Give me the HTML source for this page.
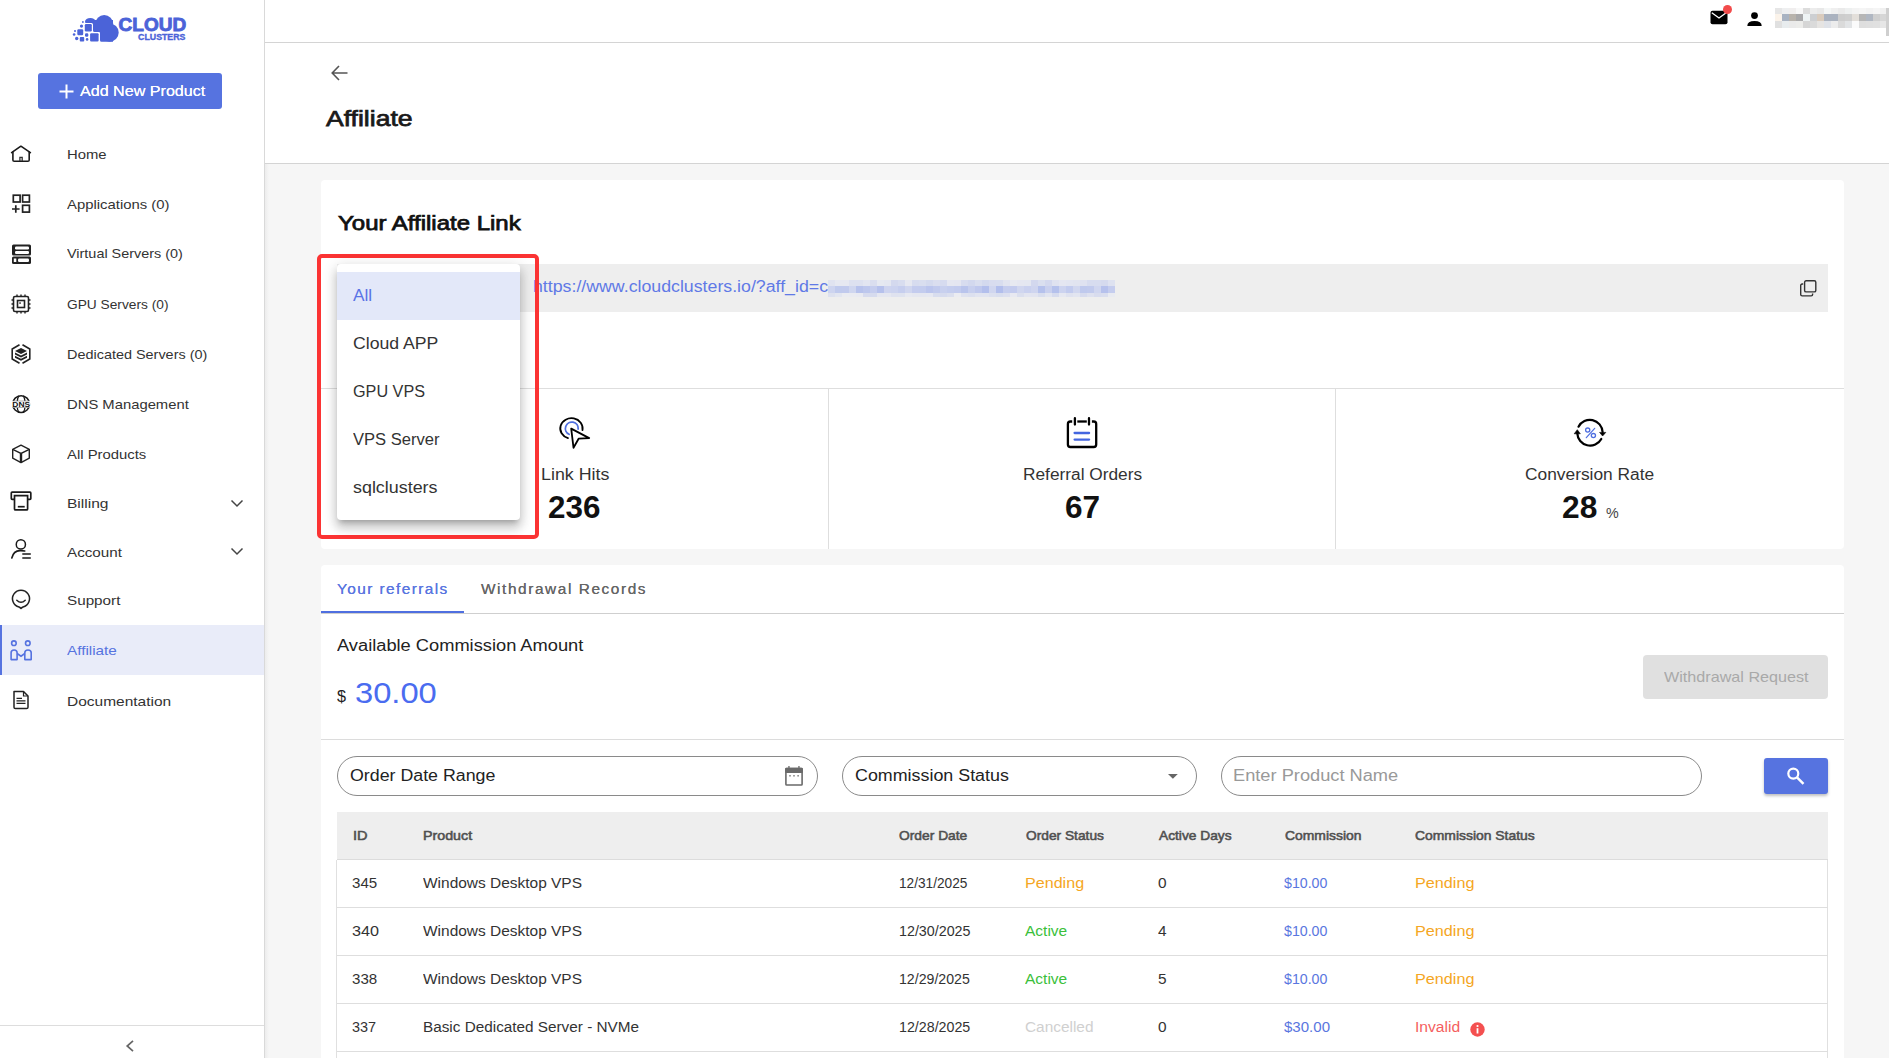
<!DOCTYPE html>
<html><head><meta charset="utf-8">
<style>
*{box-sizing:border-box;margin:0;padding:0}
html,body{width:1889px;height:1058px;overflow:hidden}
body{position:relative;background:#f6f6f6;font-family:"Liberation Sans",sans-serif;color:#333}
.a{position:absolute}
.t{position:absolute;white-space:nowrap;line-height:1}
svg{display:block;position:absolute;overflow:visible}
</style></head><body>
<div class="a" style="left:0;top:0;width:264px;height:1058px;background:#fff"></div>
<div class="a" style="left:264px;top:0;width:5px;height:1058px;background:linear-gradient(to right,#d9d9d9 0,#d9d9d9 1px,#ececec 1px,rgba(245,245,245,0) 5px)"></div>
<svg style="left:72px;top:14px" width="116" height="29" viewBox="0 0 116 29"><g fill="#4b63d8">
<ellipse cx="18.3" cy="7.5" rx="5.3" ry="3.6"/><circle cx="32.2" cy="10" r="9"/><circle cx="37.5" cy="18.6" r="9.2"/>
<path d="M17 6 H41 V27.8 H29.5 Q28 27.8 28 26.3 V19.5 Q28 18 26.5 18 H22.5 Q21 18 21 16.5 V9 Z"/>
</g><g fill="#fff"><rect x="11.6" y="8.9" width="9.4" height="9.8" rx="1.5"/><rect x="17" y="18" width="11" height="10.5" rx="1.5"/></g>
<g fill="#4b63d8"><rect x="12.8" y="10.1" width="7" height="7.4" rx="1.2"/><rect x="18.1" y="19.2" width="8.5" height="8.4" rx="1.1"/>
<rect x="5.3" y="15.2" width="5.9" height="6.1" rx="1.2"/><rect x="7.8" y="23.1" width="4.4" height="4.5" rx="0.8"/><rect x="13" y="19.2" width="3.3" height="3.5" rx="1.2"/>
<circle cx="9.5" cy="12.1" r="1.6"/><circle cx="10.9" cy="8" r="0.9"/><circle cx="3" cy="17" r="1"/><circle cx="2.1" cy="20.5" r="1.3"/><circle cx="4.7" cy="24.5" r="1.7"/><circle cx="15.1" cy="25.4" r="1.3"/></g>
<text x="46.6" y="17.3" font-family="Liberation Sans" font-weight="700" font-size="19.1" fill="#4b63d8" stroke="#4b63d8" stroke-width="0.9" textLength="67.6" lengthAdjust="spacingAndGlyphs">CLOUD</text>
<text x="66.1" y="25.8" font-family="Liberation Sans" font-weight="700" font-size="8.8" fill="#4b63d8" stroke="#4b63d8" stroke-width="0.35" textLength="47.3" lengthAdjust="spacingAndGlyphs">CLUSTERS</text>
</svg>

<div class="a" style="left:38px;top:73px;width:184px;height:36px;background:#5673e0;border-radius:3px"></div>
<svg style="left:59px;top:84px" width="15" height="15" viewBox="0 0 15 15"><path d="M7.5 0.5v14M0.5 7.5h14" stroke="#fff" stroke-width="2"/></svg>
<div class="t" style="left:80.00px;top:84.13px;font-size:14.5px;font-weight:400;color:#fff;letter-spacing:0.000px;transform:scaleX(1.1104);transform-origin:0 0;text-shadow:0 0 0.4px #fff">Add New Product</div>
<svg style="left:0px;top:130px" width="40" height="40" viewBox="0 0 40 40"><path d="M11.6 22.6 L20.9 16.2 L30.4 22.6" fill="none" stroke="#1a1a1a" stroke-width="1.6" stroke-linejoin="round" stroke-linecap="round"/><path d="M12.9 21.5 V30 Q12.9 31.3 14.2 31.3 H27.9 Q29.2 31.3 29.2 30 V21.5" fill="none" stroke="#1a1a1a" stroke-width="1.6"/><path d="M19.9 31 V27.4 H22.2 V31" fill="none" stroke="#333" stroke-width="1.3"/></svg>
<div class="t" style="left:66.70px;top:148.00px;font-size:13px;font-weight:400;color:#333;letter-spacing:0.000px;transform:scaleX(1.1416);transform-origin:0 0;">Home</div>
<svg style="left:11px;top:194px" width="20" height="20" viewBox="0 0 20 20"><rect x="2.3" y="1.2" width="6.8" height="6.8" fill="none" stroke="#222" stroke-width="1.7"/><rect x="11.6" y="1.2" width="6.8" height="6.8" fill="none" stroke="#222" stroke-width="1.7"/><rect x="11.6" y="11.3" width="6.8" height="6.8" fill="none" stroke="#222" stroke-width="1.7"/><path d="M1 15 H8.6 M4.8 11.2 V18.8" stroke="#222" stroke-width="1.7"/></svg>
<div class="t" style="left:66.70px;top:198.00px;font-size:13px;font-weight:400;color:#333;letter-spacing:0.000px;transform:scaleX(1.1439);transform-origin:0 0;">Applications (0)</div>
<svg style="left:11px;top:244px" width="20" height="20" viewBox="0 0 20 20"><rect x="1" y="0.5" width="19" height="11" rx="1.5" fill="#222"/><rect x="1" y="12.5" width="19" height="7.5" rx="1.5" fill="#222"/><rect x="4" y="2.5" width="14" height="3" rx="1.2" fill="#fff"/><rect x="4" y="7" width="14" height="3" rx="1.2" fill="#fff"/><rect x="7" y="14.5" width="11" height="3.5" rx="1.2" fill="#fff"/><rect x="2.8" y="14.5" width="2.5" height="3.5" fill="#fff"/><circle cx="3.3" cy="4" r="0.7" fill="#222"/><circle cx="3.3" cy="8.5" r="0.7" fill="#222"/></svg>
<div class="t" style="left:66.70px;top:247.40px;font-size:13px;font-weight:400;color:#333;letter-spacing:0.000px;transform:scaleX(1.1089);transform-origin:0 0;">Virtual Servers (0)</div>
<svg style="left:11px;top:294px" width="20" height="20" viewBox="0 0 20 20"><rect x="2.5" y="2.5" width="15" height="15" rx="1.5" fill="none" stroke="#222" stroke-width="1.6"/><rect x="6.5" y="6.5" width="7" height="7" fill="none" stroke="#222" stroke-width="1.6"/><rect x="8.3" y="8.3" width="1.5" height="1.5" fill="#222"/><path d="M6 0.5V2.5M10 0.5V2.5M14 0.5V2.5M6 17.5V19.5M10 17.5V19.5M14 17.5V19.5M0.5 6H2.5M0.5 10H2.5M0.5 14H2.5M17.5 6H19.5M17.5 10H19.5M17.5 14H19.5" stroke="#222" stroke-width="1.4"/></svg>
<div class="t" style="left:66.70px;top:297.70px;font-size:13px;font-weight:400;color:#333;letter-spacing:0.000px;transform:scaleX(1.0564);transform-origin:0 0;">GPU Servers (0)</div>
<svg style="left:11px;top:344px" width="20" height="20" viewBox="0 0 20 20"><path d="M8.5 0.8 L1.2 5 V15 L8.5 19.2 M11.5 0.8 L18.8 5 V15 L11.5 19.2" fill="none" stroke="#222" stroke-width="1.6"/><path d="M4 7 L10 4 L16 7 L10 10 Z" fill="#222"/><path d="M4 8.5 V10.5 L10 13.5 L16 10.5 V8.5 L10 11.5Z" fill="#222"/><path d="M4 11.8 V13.8 L10 16.8 L16 13.8 V11.8 L10 14.8Z" fill="#222"/></svg>
<div class="t" style="left:66.70px;top:347.60px;font-size:13px;font-weight:400;color:#333;letter-spacing:0.000px;transform:scaleX(1.1095);transform-origin:0 0;">Dedicated Servers (0)</div>
<svg style="left:11px;top:394px" width="20" height="20" viewBox="0 0 20 20"><circle cx="10.1" cy="10.05" r="8.4" fill="none" stroke="#1a1a1a" stroke-width="1.5"/><path d="M8.2 1.6 Q6.2 4 6.3 7 M12 1.6 Q14 4 13.9 7 M6.3 13.5 Q6.2 16.3 8.2 18.5 M13.9 13.5 Q14 16.3 12 18.5" fill="none" stroke="#1a1a1a" stroke-width="1.3"/><rect x="0.8" y="7" width="18.6" height="6.5" fill="#fff"/><path d="M1.5 7 H18.7 M1.5 13.5 H18.7" stroke="#888" stroke-width="0.7"/><text x="1.3" y="12.7" font-family="Liberation Sans" font-weight="700" font-size="6.6" fill="#111" textLength="17.8" lengthAdjust="spacingAndGlyphs">DNS</text></svg>
<div class="t" style="left:66.70px;top:397.70px;font-size:13px;font-weight:400;color:#333;letter-spacing:0.000px;transform:scaleX(1.1388);transform-origin:0 0;">DNS Management</div>
<svg style="left:11px;top:444px" width="20" height="20" viewBox="0 0 20 20"><path d="M10 1.2 L18.3 5.3 V14.2 L10 18.6 L1.7 14.2 V5.3 Z" fill="none" stroke="#222" stroke-width="1.4" stroke-linejoin="round"/><path d="M1.7 5.3 L10 9.4 L18.3 5.3" fill="none" stroke="#222" stroke-width="1.4"/><path d="M10 9.4 V18.6" stroke="#222" stroke-width="2.4"/></svg>
<div class="t" style="left:66.70px;top:448.40px;font-size:13px;font-weight:400;color:#333;letter-spacing:0.000px;transform:scaleX(1.1431);transform-origin:0 0;">All Products</div>
<svg style="left:5px;top:485px" width="35" height="35" viewBox="0 0 35 35"><path d="M9.5 14.4 H7.1 Q6.3 14.4 6.3 13.6 V8 Q6.3 7.2 7.1 7.2 H25 Q25.8 7.2 25.8 8 V13.6 Q25.8 14.4 25 14.4 H22.6" fill="none" stroke="#1a1a1a" stroke-width="1.7"/><path d="M9.5 10.6 H22.6 V23.9 Q22.6 24.9 21.6 24.9 H10.5 Q9.5 24.9 9.5 23.9 Z" fill="none" stroke="#1a1a1a" stroke-width="1.7"/><path d="M12.8 21.7 H19.7" stroke="#1a1a1a" stroke-width="1.7"/></svg>
<div class="t" style="left:66.70px;top:497.30px;font-size:13px;font-weight:400;color:#333;letter-spacing:0.000px;transform:scaleX(1.1964);transform-origin:0 0;">Billing</div>
<svg style="left:230px;top:499px" width="14" height="9" viewBox="0 0 14 9"><path d="M1.5 1.5 L7 7 L12.5 1.5" fill="none" stroke="#444" stroke-width="1.5"/></svg>
<svg style="left:5px;top:485px" width="35" height="85" viewBox="0 0 35 85"><circle cx="15.85" cy="59.4" r="4.6" fill="none" stroke="#1a1a1a" stroke-width="1.5"/><path d="M6.8 73 Q8.5 65.8 15 65.6 Q18 65.5 19.7 66" fill="none" stroke="#1a1a1a" stroke-width="1.6" stroke-linecap="round"/><path d="M17.3 69.1 H25.8 M17.3 73 H25.8" stroke="#1a1a1a" stroke-width="1.5"/></svg>
<div class="t" style="left:66.70px;top:545.80px;font-size:13px;font-weight:400;color:#333;letter-spacing:0.000px;transform:scaleX(1.1706);transform-origin:0 0;">Account</div>
<svg style="left:230px;top:547px" width="14" height="9" viewBox="0 0 14 9"><path d="M1.5 1.5 L7 7 L12.5 1.5" fill="none" stroke="#444" stroke-width="1.5"/></svg>
<svg style="left:11px;top:590px" width="20" height="20" viewBox="0 0 20 20"><path d="M10 18.5 Q8.8 17.3 8 17 A8.5 8.5 0 1 1 12 17 Q11.2 17.3 10 18.5 Z" fill="none" stroke="#222" stroke-width="1.5" stroke-linejoin="round"/><path d="M5.8 10.2 Q10 14.5 14.2 10.2" fill="none" stroke="#222" stroke-width="1.5" stroke-linecap="round"/></svg>
<div class="t" style="left:66.70px;top:594.20px;font-size:13px;font-weight:400;color:#333;letter-spacing:0.000px;transform:scaleX(1.1724);transform-origin:0 0;">Support</div>
<div class="a" style="left:0;top:625px;width:264px;height:50px;background:#e9ecf9;border-left:2px solid #5673e0"></div>
<svg style="left:0px;top:626px" width="40" height="50" viewBox="0 0 40 50"><circle cx="13.9" cy="17.2" r="2.3" fill="none" stroke="#5673e0" stroke-width="1.6"/><circle cx="27.8" cy="17.2" r="2.3" fill="none" stroke="#5673e0" stroke-width="1.6"/><path d="M11.1 33.6 V26.8 Q11.1 24 14.1 24 Q17.1 24 17.1 26.8 V33.6 Z M24.8 33.6 V26.8 Q24.8 24 28 24 Q31.2 24 31.2 26.8 V33.6 Z" fill="none" stroke="#5673e0" stroke-width="1.6" stroke-linejoin="round"/><path d="M17.1 27.5 L21 30.2 L24.8 27.5" fill="none" stroke="#5673e0" stroke-width="1.6"/></svg>
<div class="t" style="left:66.70px;top:644.10px;font-size:13px;font-weight:400;color:#5673e0;letter-spacing:0.000px;transform:scaleX(1.1744);transform-origin:0 0;">Affiliate</div>
<svg style="left:11px;top:690px" width="20" height="20" viewBox="0 0 20 20"><path d="M3 1.5 H12.5 L17 6 V17.2 Q17 18.6 15.6 18.6 H4.4 Q3 18.6 3 17.2 Z" fill="none" stroke="#222" stroke-width="1.5" stroke-linejoin="round"/><path d="M12.5 1.5 V6 H17" fill="none" stroke="#222" stroke-width="1.2"/><path d="M5.5 8.3 H11 M5.5 10.8 H14.5 M5.5 13.3 H14.5" stroke="#222" stroke-width="1.3"/></svg>
<div class="t" style="left:66.70px;top:694.70px;font-size:13px;font-weight:400;color:#333;letter-spacing:0.000px;transform:scaleX(1.1915);transform-origin:0 0;">Documentation</div>
<div class="a" style="left:0;top:1025px;width:264px;height:1px;background:#ddd"></div>
<svg style="left:125px;top:1040px" width="10" height="12" viewBox="0 0 10 12"><path d="M8 0.8 L2.2 6 L8 11.2" fill="none" stroke="#666" stroke-width="1.7"/></svg>
<div class="a" style="left:265px;top:0;width:1624px;height:43px;background:#fff;border-bottom:1px solid #d4d4d4"></div>
<svg style="left:1710px;top:10px" width="18" height="15" viewBox="0 0 18 15"><rect x="0.5" y="0.8" width="17" height="13.5" rx="2" fill="#000"/><path d="M1.8 2.8 L9 8 L16.2 2.8" fill="none" stroke="#fff" stroke-width="1.3"/></svg>
<div class="a" style="left:1723px;top:5px;width:9px;height:9px;border-radius:50%;background:#f24b4b"></div>
<svg style="left:1747px;top:12px" width="15" height="14" viewBox="0 0 15 14"><circle cx="7.5" cy="3.6" r="3.4" fill="#000"/><path d="M0.3 14 Q0.3 9 7.5 9 Q14.7 9 14.7 14 Z" fill="#000"/></svg>
<div class="a" style="left:1775px;top:8px;width:112px;height:20px;overflow:hidden"><div class="a" style="left:0px;top:0px;width:7px;height:7px;background:#e6e6e6"></div><div class="a" style="left:7px;top:0px;width:7px;height:7px;background:#eeeff0"></div><div class="a" style="left:14px;top:0px;width:7px;height:7px;background:#f0eeee"></div><div class="a" style="left:21px;top:0px;width:7px;height:7px;background:#f8f8f8"></div><div class="a" style="left:28px;top:0px;width:7px;height:7px;background:#dcdcdc"></div><div class="a" style="left:35px;top:0px;width:7px;height:7px;background:#ececec"></div><div class="a" style="left:42px;top:0px;width:7px;height:7px;background:#e8e8e8"></div><div class="a" style="left:49px;top:0px;width:7px;height:7px;background:#f4f6f6"></div><div class="a" style="left:56px;top:0px;width:7px;height:7px;background:#efefef"></div><div class="a" style="left:63px;top:0px;width:7px;height:7px;background:#eaeaea"></div><div class="a" style="left:70px;top:0px;width:7px;height:7px;background:#eef0f0"></div><div class="a" style="left:77px;top:0px;width:7px;height:7px;background:#f3f3f3"></div><div class="a" style="left:84px;top:0px;width:7px;height:7px;background:#f5f5f5"></div><div class="a" style="left:91px;top:0px;width:7px;height:7px;background:#f2f2f2"></div><div class="a" style="left:98px;top:0px;width:7px;height:7px;background:#f5f5f5"></div><div class="a" style="left:105px;top:0px;width:7px;height:7px;background:#f0f0f0"></div><div class="a" style="left:0px;top:6px;width:7px;height:7px;background:#fbf3ea"></div><div class="a" style="left:7px;top:6px;width:7px;height:7px;background:#a9b3c2"></div><div class="a" style="left:14px;top:6px;width:7px;height:7px;background:#b8b3ac"></div><div class="a" style="left:21px;top:6px;width:7px;height:7px;background:#a8a8aa"></div><div class="a" style="left:28px;top:6px;width:7px;height:7px;background:#eef3f4"></div><div class="a" style="left:35px;top:6px;width:7px;height:7px;background:#cdcfd2"></div><div class="a" style="left:42px;top:6px;width:7px;height:7px;background:#d9cbbd"></div><div class="a" style="left:49px;top:6px;width:7px;height:7px;background:#aab2bf"></div><div class="a" style="left:56px;top:6px;width:7px;height:7px;background:#aab2bf"></div><div class="a" style="left:63px;top:6px;width:7px;height:7px;background:#cdcdcd"></div><div class="a" style="left:70px;top:6px;width:7px;height:7px;background:#cfcfcf"></div><div class="a" style="left:77px;top:6px;width:7px;height:7px;background:#e3dfda"></div><div class="a" style="left:84px;top:6px;width:7px;height:7px;background:#b6b6b6"></div><div class="a" style="left:91px;top:6px;width:7px;height:7px;background:#b0b7c2"></div><div class="a" style="left:98px;top:6px;width:7px;height:7px;background:#cfcfcf"></div><div class="a" style="left:105px;top:6px;width:7px;height:7px;background:#d6d6d6"></div><div class="a" style="left:0px;top:13px;width:7px;height:7px;background:#e0e0e0"></div><div class="a" style="left:7px;top:13px;width:7px;height:7px;background:#e8ecee"></div><div class="a" style="left:14px;top:13px;width:7px;height:7px;background:#eaeaea"></div><div class="a" style="left:21px;top:13px;width:7px;height:7px;background:#ececea"></div><div class="a" style="left:28px;top:13px;width:7px;height:7px;background:#d6d6d6"></div><div class="a" style="left:35px;top:13px;width:7px;height:7px;background:#dadada"></div><div class="a" style="left:42px;top:13px;width:7px;height:7px;background:#e6e4e2"></div><div class="a" style="left:49px;top:13px;width:7px;height:7px;background:#dfe2e8"></div><div class="a" style="left:56px;top:13px;width:7px;height:7px;background:#ececec"></div><div class="a" style="left:63px;top:13px;width:7px;height:7px;background:#dadada"></div><div class="a" style="left:70px;top:13px;width:7px;height:7px;background:#e2e4e6"></div><div class="a" style="left:77px;top:13px;width:7px;height:7px;background:#fbfbfb"></div><div class="a" style="left:84px;top:13px;width:7px;height:7px;background:#dedede"></div><div class="a" style="left:91px;top:13px;width:7px;height:7px;background:#dfdfdf"></div><div class="a" style="left:98px;top:13px;width:7px;height:7px;background:#e0e0e0"></div><div class="a" style="left:105px;top:13px;width:7px;height:7px;background:#e6e6e6"></div></div>
<div class="a" style="left:1886px;top:8px;width:3px;height:28px;background:#cfcfcf"></div>
<div class="a" style="left:265px;top:43px;width:1624px;height:121px;background:#fff;border-bottom:1px solid #d4d4d4"></div>
<svg style="left:331px;top:65px" width="17" height="16" viewBox="0 0 17 16"><path d="M8 1 L1.2 8 L8 15 M1.2 8 H16.5" fill="none" stroke="#555" stroke-width="1.6"/></svg>
<div class="t" style="left:325.50px;top:108.08px;font-size:22px;font-weight:400;color:#1a1a1a;letter-spacing:0.000px;transform:scaleX(1.2056);transform-origin:0 0;-webkit-text-stroke:0.75px #1a1a1a">Affiliate</div>
<div class="a" style="left:321px;top:180px;width:1523px;height:369px;background:#fff;border-radius:4px"></div>
<div class="t" style="left:337.50px;top:212.97px;font-size:20px;font-weight:400;color:#111;letter-spacing:0.000px;transform:scaleX(1.1993);transform-origin:0 0;-webkit-text-stroke:0.75px #111">Your Affiliate Link</div>
<div class="a" style="left:337px;top:264px;width:1491px;height:48px;background:#eeeeee"></div>
<div class="t" style="left:533.00px;top:278.96px;font-size:16px;font-weight:400;color:#6079e6;letter-spacing:0.000px;transform:scaleX(1.1088);transform-origin:0 0;">https://www.cloudclusters.io/?aff_id=c</div>
<div class="a" style="left:828px;top:279.6px;width:287px;height:17.4px;overflow:hidden"><div class="a" style="left:0px;top:0px;width:7px;height:6.7px;background:rgb(224, 227, 240)"></div><div class="a" style="left:0px;top:6.7px;width:7px;height:7.1px;background:rgb(205, 212, 239)"></div><div class="a" style="left:0px;top:13.8px;width:7px;height:3.6px;background:rgb(221, 225, 239)"></div><div class="a" style="left:7px;top:0px;width:7px;height:6.7px;background:rgb(230, 232, 241)"></div><div class="a" style="left:7px;top:6.7px;width:7px;height:7.1px;background:rgb(192, 202, 237)"></div><div class="a" style="left:7px;top:13.8px;width:7px;height:3.6px;background:rgb(227, 230, 240)"></div><div class="a" style="left:14px;top:0px;width:7px;height:6.7px;background:rgb(230, 232, 241)"></div><div class="a" style="left:14px;top:6.7px;width:7px;height:7.1px;background:rgb(193, 202, 237)"></div><div class="a" style="left:14px;top:13.8px;width:7px;height:3.6px;background:rgb(235, 236, 241)"></div><div class="a" style="left:21px;top:0px;width:7px;height:6.7px;background:rgb(221, 225, 240)"></div><div class="a" style="left:21px;top:6.7px;width:7px;height:7.1px;background:rgb(207, 214, 239)"></div><div class="a" style="left:21px;top:13.8px;width:7px;height:3.6px;background:rgb(234, 235, 241)"></div><div class="a" style="left:28px;top:0px;width:7px;height:6.7px;background:rgb(221, 225, 240)"></div><div class="a" style="left:28px;top:6.7px;width:7px;height:7.1px;background:rgb(183, 194, 236)"></div><div class="a" style="left:28px;top:13.8px;width:7px;height:3.6px;background:rgb(233, 234, 241)"></div><div class="a" style="left:35px;top:0px;width:7px;height:6.7px;background:rgb(226, 229, 241)"></div><div class="a" style="left:35px;top:6.7px;width:7px;height:7.1px;background:rgb(189, 199, 237)"></div><div class="a" style="left:35px;top:13.8px;width:7px;height:3.6px;background:rgb(215, 219, 238)"></div><div class="a" style="left:42px;top:0px;width:7px;height:6.7px;background:rgb(218, 222, 239)"></div><div class="a" style="left:42px;top:6.7px;width:7px;height:7.1px;background:rgb(197, 205, 238)"></div><div class="a" style="left:42px;top:13.8px;width:7px;height:3.6px;background:rgb(214, 219, 238)"></div><div class="a" style="left:49px;top:0px;width:7px;height:6.7px;background:rgb(230, 233, 241)"></div><div class="a" style="left:49px;top:6.7px;width:7px;height:7.1px;background:rgb(182, 193, 236)"></div><div class="a" style="left:49px;top:13.8px;width:7px;height:3.6px;background:rgb(229, 231, 240)"></div><div class="a" style="left:56px;top:0px;width:7px;height:6.7px;background:rgb(228, 231, 241)"></div><div class="a" style="left:56px;top:6.7px;width:7px;height:7.1px;background:rgb(206, 212, 239)"></div><div class="a" style="left:56px;top:13.8px;width:7px;height:3.6px;background:rgb(229, 231, 240)"></div><div class="a" style="left:63px;top:0px;width:7px;height:6.7px;background:rgb(212, 217, 238)"></div><div class="a" style="left:63px;top:6.7px;width:7px;height:7.1px;background:rgb(204, 211, 239)"></div><div class="a" style="left:63px;top:13.8px;width:7px;height:3.6px;background:rgb(223, 226, 239)"></div><div class="a" style="left:70px;top:0px;width:7px;height:6.7px;background:rgb(216, 221, 239)"></div><div class="a" style="left:70px;top:6.7px;width:7px;height:7.1px;background:rgb(198, 206, 238)"></div><div class="a" style="left:70px;top:13.8px;width:7px;height:3.6px;background:rgb(223, 227, 239)"></div><div class="a" style="left:77px;top:0px;width:7px;height:6.7px;background:rgb(230, 232, 241)"></div><div class="a" style="left:77px;top:6.7px;width:7px;height:7.1px;background:rgb(208, 214, 239)"></div><div class="a" style="left:77px;top:13.8px;width:7px;height:3.6px;background:rgb(231, 233, 241)"></div><div class="a" style="left:84px;top:0px;width:7px;height:6.7px;background:rgb(215, 220, 239)"></div><div class="a" style="left:84px;top:6.7px;width:7px;height:7.1px;background:rgb(196, 204, 238)"></div><div class="a" style="left:84px;top:13.8px;width:7px;height:3.6px;background:rgb(229, 231, 240)"></div><div class="a" style="left:91px;top:0px;width:7px;height:6.7px;background:rgb(217, 222, 239)"></div><div class="a" style="left:91px;top:6.7px;width:7px;height:7.1px;background:rgb(195, 204, 238)"></div><div class="a" style="left:91px;top:13.8px;width:7px;height:3.6px;background:rgb(229, 231, 240)"></div><div class="a" style="left:98px;top:0px;width:7px;height:6.7px;background:rgb(212, 218, 238)"></div><div class="a" style="left:98px;top:6.7px;width:7px;height:7.1px;background:rgb(187, 197, 237)"></div><div class="a" style="left:98px;top:13.8px;width:7px;height:3.6px;background:rgb(230, 232, 241)"></div><div class="a" style="left:105px;top:0px;width:7px;height:6.7px;background:rgb(218, 222, 239)"></div><div class="a" style="left:105px;top:6.7px;width:7px;height:7.1px;background:rgb(193, 202, 237)"></div><div class="a" style="left:105px;top:13.8px;width:7px;height:3.6px;background:rgb(216, 221, 238)"></div><div class="a" style="left:112px;top:0px;width:7px;height:6.7px;background:rgb(214, 219, 239)"></div><div class="a" style="left:112px;top:6.7px;width:7px;height:7.1px;background:rgb(200, 208, 238)"></div><div class="a" style="left:112px;top:13.8px;width:7px;height:3.6px;background:rgb(214, 219, 238)"></div><div class="a" style="left:119px;top:0px;width:7px;height:6.7px;background:rgb(229, 231, 241)"></div><div class="a" style="left:119px;top:6.7px;width:7px;height:7.1px;background:rgb(196, 205, 238)"></div><div class="a" style="left:119px;top:13.8px;width:7px;height:3.6px;background:rgb(219, 223, 238)"></div><div class="a" style="left:126px;top:0px;width:7px;height:6.7px;background:rgb(228, 230, 241)"></div><div class="a" style="left:126px;top:6.7px;width:7px;height:7.1px;background:rgb(194, 203, 238)"></div><div class="a" style="left:126px;top:13.8px;width:7px;height:3.6px;background:rgb(235, 236, 241)"></div><div class="a" style="left:133px;top:0px;width:7px;height:6.7px;background:rgb(215, 220, 239)"></div><div class="a" style="left:133px;top:6.7px;width:7px;height:7.1px;background:rgb(185, 196, 236)"></div><div class="a" style="left:133px;top:13.8px;width:7px;height:3.6px;background:rgb(223, 226, 239)"></div><div class="a" style="left:140px;top:0px;width:7px;height:6.7px;background:rgb(210, 216, 238)"></div><div class="a" style="left:140px;top:6.7px;width:7px;height:7.1px;background:rgb(199, 207, 238)"></div><div class="a" style="left:140px;top:13.8px;width:7px;height:3.6px;background:rgb(220, 224, 239)"></div><div class="a" style="left:147px;top:0px;width:7px;height:6.7px;background:rgb(217, 222, 239)"></div><div class="a" style="left:147px;top:6.7px;width:7px;height:7.1px;background:rgb(191, 200, 237)"></div><div class="a" style="left:147px;top:13.8px;width:7px;height:3.6px;background:rgb(225, 228, 240)"></div><div class="a" style="left:154px;top:0px;width:7px;height:6.7px;background:rgb(211, 217, 238)"></div><div class="a" style="left:154px;top:6.7px;width:7px;height:7.1px;background:rgb(179, 191, 236)"></div><div class="a" style="left:154px;top:13.8px;width:7px;height:3.6px;background:rgb(225, 228, 240)"></div><div class="a" style="left:161px;top:0px;width:7px;height:6.7px;background:rgb(216, 220, 239)"></div><div class="a" style="left:161px;top:6.7px;width:7px;height:7.1px;background:rgb(208, 214, 239)"></div><div class="a" style="left:161px;top:13.8px;width:7px;height:3.6px;background:rgb(220, 224, 239)"></div><div class="a" style="left:168px;top:0px;width:7px;height:6.7px;background:rgb(216, 221, 239)"></div><div class="a" style="left:168px;top:6.7px;width:7px;height:7.1px;background:rgb(178, 190, 236)"></div><div class="a" style="left:168px;top:13.8px;width:7px;height:3.6px;background:rgb(217, 222, 238)"></div><div class="a" style="left:175px;top:0px;width:7px;height:6.7px;background:rgb(225, 228, 240)"></div><div class="a" style="left:175px;top:6.7px;width:7px;height:7.1px;background:rgb(197, 205, 238)"></div><div class="a" style="left:175px;top:13.8px;width:7px;height:3.6px;background:rgb(221, 224, 239)"></div><div class="a" style="left:182px;top:0px;width:7px;height:6.7px;background:rgb(231, 233, 241)"></div><div class="a" style="left:182px;top:6.7px;width:7px;height:7.1px;background:rgb(195, 203, 238)"></div><div class="a" style="left:182px;top:13.8px;width:7px;height:3.6px;background:rgb(232, 233, 241)"></div><div class="a" style="left:189px;top:0px;width:7px;height:6.7px;background:rgb(229, 231, 241)"></div><div class="a" style="left:189px;top:6.7px;width:7px;height:7.1px;background:rgb(208, 214, 239)"></div><div class="a" style="left:189px;top:13.8px;width:7px;height:3.6px;background:rgb(219, 223, 238)"></div><div class="a" style="left:196px;top:0px;width:7px;height:6.7px;background:rgb(228, 231, 241)"></div><div class="a" style="left:196px;top:6.7px;width:7px;height:7.1px;background:rgb(202, 209, 239)"></div><div class="a" style="left:196px;top:13.8px;width:7px;height:3.6px;background:rgb(227, 229, 240)"></div><div class="a" style="left:203px;top:0px;width:7px;height:6.7px;background:rgb(211, 216, 238)"></div><div class="a" style="left:203px;top:6.7px;width:7px;height:7.1px;background:rgb(207, 213, 239)"></div><div class="a" style="left:203px;top:13.8px;width:7px;height:3.6px;background:rgb(226, 228, 240)"></div><div class="a" style="left:210px;top:0px;width:7px;height:6.7px;background:rgb(218, 223, 239)"></div><div class="a" style="left:210px;top:6.7px;width:7px;height:7.1px;background:rgb(181, 193, 236)"></div><div class="a" style="left:210px;top:13.8px;width:7px;height:3.6px;background:rgb(217, 222, 238)"></div><div class="a" style="left:217px;top:0px;width:7px;height:6.7px;background:rgb(211, 216, 238)"></div><div class="a" style="left:217px;top:6.7px;width:7px;height:7.1px;background:rgb(201, 208, 238)"></div><div class="a" style="left:217px;top:13.8px;width:7px;height:3.6px;background:rgb(226, 229, 240)"></div><div class="a" style="left:224px;top:0px;width:7px;height:6.7px;background:rgb(223, 226, 240)"></div><div class="a" style="left:224px;top:6.7px;width:7px;height:7.1px;background:rgb(181, 193, 236)"></div><div class="a" style="left:224px;top:13.8px;width:7px;height:3.6px;background:rgb(214, 219, 238)"></div><div class="a" style="left:231px;top:0px;width:7px;height:6.7px;background:rgb(228, 230, 241)"></div><div class="a" style="left:231px;top:6.7px;width:7px;height:7.1px;background:rgb(204, 211, 239)"></div><div class="a" style="left:231px;top:13.8px;width:7px;height:3.6px;background:rgb(230, 232, 241)"></div><div class="a" style="left:238px;top:0px;width:7px;height:6.7px;background:rgb(226, 229, 241)"></div><div class="a" style="left:238px;top:6.7px;width:7px;height:7.1px;background:rgb(194, 203, 238)"></div><div class="a" style="left:238px;top:13.8px;width:7px;height:3.6px;background:rgb(223, 226, 239)"></div><div class="a" style="left:245px;top:0px;width:7px;height:6.7px;background:rgb(225, 228, 240)"></div><div class="a" style="left:245px;top:6.7px;width:7px;height:7.1px;background:rgb(209, 215, 239)"></div><div class="a" style="left:245px;top:13.8px;width:7px;height:3.6px;background:rgb(226, 229, 240)"></div><div class="a" style="left:252px;top:0px;width:7px;height:6.7px;background:rgb(223, 226, 240)"></div><div class="a" style="left:252px;top:6.7px;width:7px;height:7.1px;background:rgb(191, 201, 237)"></div><div class="a" style="left:252px;top:13.8px;width:7px;height:3.6px;background:rgb(215, 219, 238)"></div><div class="a" style="left:259px;top:0px;width:7px;height:6.7px;background:rgb(215, 220, 239)"></div><div class="a" style="left:259px;top:6.7px;width:7px;height:7.1px;background:rgb(193, 202, 237)"></div><div class="a" style="left:259px;top:13.8px;width:7px;height:3.6px;background:rgb(222, 225, 239)"></div><div class="a" style="left:266px;top:0px;width:7px;height:6.7px;background:rgb(215, 220, 239)"></div><div class="a" style="left:266px;top:6.7px;width:7px;height:7.1px;background:rgb(208, 214, 239)"></div><div class="a" style="left:266px;top:13.8px;width:7px;height:3.6px;background:rgb(216, 220, 238)"></div><div class="a" style="left:273px;top:0px;width:7px;height:6.7px;background:rgb(213, 218, 238)"></div><div class="a" style="left:273px;top:6.7px;width:7px;height:7.1px;background:rgb(182, 193, 236)"></div><div class="a" style="left:273px;top:13.8px;width:7px;height:3.6px;background:rgb(218, 222, 238)"></div><div class="a" style="left:280px;top:0px;width:7px;height:6.7px;background:rgb(222, 226, 240)"></div><div class="a" style="left:280px;top:6.7px;width:7px;height:7.1px;background:rgb(197, 205, 238)"></div><div class="a" style="left:280px;top:13.8px;width:7px;height:3.6px;background:rgb(233, 235, 241)"></div></div>
<svg style="left:1800px;top:280px" width="17" height="17" viewBox="0 0 17 17"><rect x="4.6" y="0.7" width="11.2" height="11.2" rx="1.5" fill="none" stroke="#333" stroke-width="1.4"/><path d="M3.2 4 H2.2 Q0.7 4 0.7 5.5 V14.5 Q0.7 15.9 2.2 15.9 H11.2 Q12.6 15.9 12.6 14.5 V13.5" fill="none" stroke="#333" stroke-width="1.4"/></svg>
<div class="a" style="left:321px;top:388px;width:1523px;height:1px;background:#dedede"></div>
<div class="a" style="left:828px;top:388px;width:1px;height:161px;background:#dedede"></div>
<div class="a" style="left:1335px;top:388px;width:1px;height:161px;background:#dedede"></div>
<svg style="left:554px;top:412px" width="40" height="40" viewBox="0 0 40 40"><path d="M14 26.1 A11.2 10.2 0 1 1 28.5 18.1" fill="none" stroke="#000" stroke-width="1.8" stroke-linecap="round"/><path d="M15.1 22.3 A6.4 6.4 0 1 1 24.2 17" fill="none" stroke="#4f6fe0" stroke-width="1.8" stroke-linecap="round"/><path d="M17.2 16.6 L35.2 26.1 L24.6 26.7 L19.5 35.7 Z" fill="#fff" stroke="#000" stroke-width="1.8" stroke-linejoin="round"/></svg>
<svg style="left:1062px;top:412px" width="40" height="40" viewBox="0 0 40 40"><path d="M10.2 9.5 H8.4 Q5.9 9.5 5.9 12 V32.5 Q5.9 35 8.4 35 H31.7 Q34.2 35 34.2 32.5 V12 Q34.2 9.5 31.7 9.5 H29.9" fill="none" stroke="#000" stroke-width="2.3"/><path d="M12.9 6.2 V12.5 M27 6.2 V12.5" stroke="#000" stroke-width="2.3" stroke-linecap="round"/><path d="M15.3 9.5 H24.8" stroke="#000" stroke-width="2.3"/><path d="M12.6 21 H27.1 M12.6 27.6 H27.1" stroke="#4466e0" stroke-width="2.3" stroke-linecap="round"/></svg>
<svg style="left:1569px;top:412px" width="40" height="40" viewBox="0 0 40 40"><path d="M9.5 14.7 A12.8 12.8 0 0 1 33.6 20" fill="none" stroke="#000" stroke-width="2.2" stroke-linecap="round"/><path d="M30.6 20.4 H36.8 L33.6 24 Z" fill="#000" stroke="#000" stroke-width="0.6" stroke-linejoin="round"/><path d="M32.3 27 A12.8 12.8 0 0 1 8.3 21.4" fill="none" stroke="#000" stroke-width="2.2" stroke-linecap="round"/><path d="M5.2 21.8 H11.3 L8.3 17.7 Z" fill="#000" stroke="#000" stroke-width="0.6" stroke-linejoin="round"/><circle cx="18.7" cy="18.1" r="2.1" fill="none" stroke="#4f6fe0" stroke-width="1.3"/><circle cx="24.4" cy="23.6" r="2.1" fill="none" stroke="#4f6fe0" stroke-width="1.3"/><path d="M25.7 16.3 L17.3 25.7" stroke="#4f6fe0" stroke-width="1.2" stroke-linecap="round"/></svg>
<div class="t" style="left:540.60px;top:467.26px;font-size:16px;font-weight:400;color:#333;letter-spacing:0.000px;transform:scaleX(1.1147);transform-origin:0 0;">Link Hits</div>
<div class="t" style="left:548.30px;top:492.48px;font-size:30.5px;font-weight:700;color:#111;letter-spacing:0.000px;transform:scaleX(1.0297);transform-origin:0 0;">236</div>
<div class="t" style="left:1023.20px;top:467.26px;font-size:16px;font-weight:400;color:#333;letter-spacing:0.000px;transform:scaleX(1.0803);transform-origin:0 0;">Referral Orders</div>
<div class="t" style="left:1064.80px;top:492.48px;font-size:30.5px;font-weight:700;color:#111;letter-spacing:0.000px;transform:scaleX(1.0343);transform-origin:0 0;">67</div>
<div class="t" style="left:1525.40px;top:467.26px;font-size:16px;font-weight:400;color:#333;letter-spacing:0.000px;transform:scaleX(1.0841);transform-origin:0 0;">Conversion Rate</div>
<div class="t" style="left:1562.00px;top:492.48px;font-size:30.5px;font-weight:700;color:#111;letter-spacing:0.000px;transform:scaleX(1.0401);transform-origin:0 0;">28</div>
<div class="t" style="left:1606.00px;top:505.53px;font-size:14.5px;font-weight:400;color:#444;letter-spacing:0.000px;transform:scaleX(0.9840);transform-origin:0 0;">%</div>
<div class="a" style="left:321px;top:565px;width:1523px;height:520px;background:#fff;border-radius:4px"></div>
<div class="t" style="left:337.10px;top:582.45px;font-size:14px;font-weight:400;color:#5a76e0;letter-spacing:1.290px;transform:scaleX(1.1000);transform-origin:0 0;text-shadow:0 0 0.3px #5a76e0">Your referrals</div>
<div class="t" style="left:480.70px;top:582.45px;font-size:14px;font-weight:400;color:#666;letter-spacing:1.430px;transform:scaleX(1.1000);transform-origin:0 0;text-shadow:0 0 0.3px #666">Withdrawal Records</div>
<div class="a" style="left:321px;top:613px;width:1523px;height:1px;background:#cfcfcf"></div>
<div class="a" style="left:321px;top:611px;width:143px;height:2px;background:#4f6fe0"></div>
<div class="t" style="left:337.00px;top:637.66px;font-size:16px;font-weight:400;color:#222;letter-spacing:0.000px;transform:scaleX(1.1413);transform-origin:0 0;">Available Commission Amount</div>
<div class="t" style="left:337.00px;top:688.76px;font-size:16px;font-weight:400;color:#222;letter-spacing:0.000px;transform:scaleX(1.0105);transform-origin:0 0;">$</div>
<div class="t" style="left:355.40px;top:677.50px;font-size:30px;font-weight:400;color:#4a6cf0;letter-spacing:0.000px;transform:scaleX(1.0895);transform-origin:0 0;">30.00</div>
<div class="a" style="left:1643px;top:655px;width:185px;height:44px;background:#e0e0e0;border-radius:4px"></div>
<div class="t" style="left:1663.80px;top:669.40px;font-size:15px;font-weight:400;color:#a9a9a9;letter-spacing:0.000px;transform:scaleX(1.0772);transform-origin:0 0;">Withdrawal Request</div>
<div class="a" style="left:321px;top:739px;width:1523px;height:1px;background:#dcdcdc"></div>
<div class="a" style="left:337px;top:756px;width:481px;height:40px;border:1px solid #8a8a8a;border-radius:20px"></div>
<div class="t" style="left:349.50px;top:767.76px;font-size:16px;font-weight:400;color:#222;letter-spacing:0.000px;transform:scaleX(1.1114);transform-origin:0 0;">Order Date Range</div>
<svg style="left:770px;top:755px" width="40" height="40" viewBox="0 0 40 40"><rect x="15.9" y="13.6" width="16.2" height="16.4" rx="0.8" fill="none" stroke="#6a6a6a" stroke-width="1.6"/><rect x="15.1" y="12.8" width="17.8" height="5.1" rx="1" fill="#6a6a6a"/><rect x="18.3" y="11" width="1.3" height="2.2" fill="#6a6a6a"/><rect x="28.3" y="11" width="1.3" height="2.2" fill="#6a6a6a"/><rect x="19.3" y="20.1" width="1.4" height="1.4" fill="#6a6a6a"/><rect x="23.3" y="20.1" width="1.4" height="1.4" fill="#6a6a6a"/><rect x="27.4" y="20.1" width="1.4" height="1.4" fill="#6a6a6a"/></svg>
<div class="a" style="left:842px;top:756px;width:355px;height:40px;border:1px solid #8a8a8a;border-radius:20px"></div>
<div class="t" style="left:854.50px;top:767.76px;font-size:16px;font-weight:400;color:#222;letter-spacing:0.000px;transform:scaleX(1.1166);transform-origin:0 0;">Commission Status</div>
<svg style="left:1168px;top:774.2px" width="10" height="5" viewBox="0 0 10 5"><path d="M0 0 L4.9 4.8 L9.8 0 Z" fill="#666"/></svg>
<div class="a" style="left:1221px;top:756px;width:481px;height:40px;border:1px solid #8a8a8a;border-radius:20px"></div>
<div class="t" style="left:1233.30px;top:767.76px;font-size:16px;font-weight:400;color:#999;letter-spacing:0.000px;transform:scaleX(1.1397);transform-origin:0 0;">Enter Product Name</div>
<div class="a" style="left:1764px;top:758px;width:64px;height:36px;background:#5673e0;border-radius:3px;box-shadow:0 2px 3px rgba(0,0,0,0.25)"></div>
<svg style="left:1786px;top:766px" width="20" height="20" viewBox="0 0 20 20"><circle cx="7.3" cy="7.6" r="5" fill="none" stroke="#fff" stroke-width="2.2"/><path d="M11 11.3 L17.5 17.8" stroke="#fff" stroke-width="2.4"/></svg>
<div class="a" style="left:337px;top:812px;width:1491px;height:48px;background:#eeeeee;border-bottom:1px solid #dcdcdc"></div>
<div class="a" style="left:336px;top:860px;width:1492px;height:220px;background:#fff;border-left:1px solid #e0e0e0;border-right:1px solid #e0e0e0"></div>
<div class="t" style="left:353.40px;top:828.80px;font-size:13px;font-weight:400;color:#505050;letter-spacing:0.000px;transform:scaleX(1.1200);transform-origin:0 0;-webkit-text-stroke:0.55px #505050">ID</div>
<div class="t" style="left:423.40px;top:828.80px;font-size:13px;font-weight:400;color:#505050;letter-spacing:0.000px;transform:scaleX(1.0957);transform-origin:0 0;-webkit-text-stroke:0.55px #505050">Product</div>
<div class="t" style="left:898.70px;top:828.80px;font-size:13px;font-weight:400;color:#505050;letter-spacing:0.000px;transform:scaleX(1.0620);transform-origin:0 0;-webkit-text-stroke:0.55px #505050">Order Date</div>
<div class="t" style="left:1025.80px;top:828.80px;font-size:13px;font-weight:400;color:#505050;letter-spacing:0.000px;transform:scaleX(1.0569);transform-origin:0 0;-webkit-text-stroke:0.55px #505050">Order Status</div>
<div class="t" style="left:1158.80px;top:828.80px;font-size:13px;font-weight:400;color:#505050;letter-spacing:0.000px;transform:scaleX(1.0577);transform-origin:0 0;-webkit-text-stroke:0.55px #505050">Active Days</div>
<div class="t" style="left:1284.80px;top:828.80px;font-size:13px;font-weight:400;color:#505050;letter-spacing:0.000px;transform:scaleX(1.0697);transform-origin:0 0;-webkit-text-stroke:0.55px #505050">Commission</div>
<div class="t" style="left:1415.40px;top:828.80px;font-size:13px;font-weight:400;color:#505050;letter-spacing:0.000px;transform:scaleX(1.0689);transform-origin:0 0;-webkit-text-stroke:0.55px #505050">Commission Status</div>
<div class="a" style="left:337px;top:907px;width:1491px;height:1px;background:#dedede"></div>
<div class="t" style="left:352.40px;top:876.15px;font-size:14px;font-weight:400;color:#333;letter-spacing:0.000px;transform:scaleX(1.0788);transform-origin:0 0;">345</div>
<div class="t" style="left:423.30px;top:876.15px;font-size:14px;font-weight:400;color:#333;letter-spacing:0.000px;transform:scaleX(1.1045);transform-origin:0 0;">Windows Desktop VPS</div>
<div class="t" style="left:898.50px;top:876.15px;font-size:14px;font-weight:400;color:#333;letter-spacing:0.000px;transform:scaleX(0.9761);transform-origin:0 0;">12/31/2025</div>
<div class="t" style="left:1025.00px;top:876.15px;font-size:14px;font-weight:400;color:#f5a623;letter-spacing:0.000px;transform:scaleX(1.1500);transform-origin:0 0;">Pending</div>
<div class="t" style="left:1158.00px;top:876.15px;font-size:14px;font-weight:400;color:#333;letter-spacing:0.000px;transform:scaleX(1.1000);transform-origin:0 0;">0</div>
<div class="t" style="left:1284.00px;top:876.15px;font-size:14px;font-weight:400;color:#5a76e0;letter-spacing:0.000px;transform:scaleX(1.0134);transform-origin:0 0;">$10.00</div>
<div class="t" style="left:1414.60px;top:876.15px;font-size:14px;font-weight:400;color:#f5a623;letter-spacing:0.000px;transform:scaleX(1.1559);transform-origin:0 0;">Pending</div>
<div class="a" style="left:337px;top:955px;width:1491px;height:1px;background:#dedede"></div>
<div class="t" style="left:352.40px;top:924.15px;font-size:14px;font-weight:400;color:#333;letter-spacing:0.000px;transform:scaleX(1.1559);transform-origin:0 0;">340</div>
<div class="t" style="left:423.30px;top:924.15px;font-size:14px;font-weight:400;color:#333;letter-spacing:0.000px;transform:scaleX(1.1045);transform-origin:0 0;">Windows Desktop VPS</div>
<div class="t" style="left:898.50px;top:924.15px;font-size:14px;font-weight:400;color:#333;letter-spacing:0.000px;transform:scaleX(1.0203);transform-origin:0 0;">12/30/2025</div>
<div class="t" style="left:1025.00px;top:924.15px;font-size:14px;font-weight:400;color:#3bbf3b;letter-spacing:0.000px;transform:scaleX(1.1069);transform-origin:0 0;">Active</div>
<div class="t" style="left:1158.00px;top:924.15px;font-size:14px;font-weight:400;color:#333;letter-spacing:0.000px;transform:scaleX(1.1000);transform-origin:0 0;">4</div>
<div class="t" style="left:1284.00px;top:924.15px;font-size:14px;font-weight:400;color:#5a76e0;letter-spacing:0.000px;transform:scaleX(1.0134);transform-origin:0 0;">$10.00</div>
<div class="t" style="left:1414.60px;top:924.15px;font-size:14px;font-weight:400;color:#f5a623;letter-spacing:0.000px;transform:scaleX(1.1559);transform-origin:0 0;">Pending</div>
<div class="a" style="left:337px;top:1003px;width:1491px;height:1px;background:#dedede"></div>
<div class="t" style="left:352.40px;top:972.15px;font-size:14px;font-weight:400;color:#333;letter-spacing:0.000px;transform:scaleX(1.0788);transform-origin:0 0;">338</div>
<div class="t" style="left:423.30px;top:972.15px;font-size:14px;font-weight:400;color:#333;letter-spacing:0.000px;transform:scaleX(1.1045);transform-origin:0 0;">Windows Desktop VPS</div>
<div class="t" style="left:898.50px;top:972.15px;font-size:14px;font-weight:400;color:#333;letter-spacing:0.000px;transform:scaleX(1.0103);transform-origin:0 0;">12/29/2025</div>
<div class="t" style="left:1025.00px;top:972.15px;font-size:14px;font-weight:400;color:#3bbf3b;letter-spacing:0.000px;transform:scaleX(1.1069);transform-origin:0 0;">Active</div>
<div class="t" style="left:1158.00px;top:972.15px;font-size:14px;font-weight:400;color:#333;letter-spacing:0.000px;transform:scaleX(1.1000);transform-origin:0 0;">5</div>
<div class="t" style="left:1284.00px;top:972.15px;font-size:14px;font-weight:400;color:#5a76e0;letter-spacing:0.000px;transform:scaleX(1.0134);transform-origin:0 0;">$10.00</div>
<div class="t" style="left:1414.60px;top:972.15px;font-size:14px;font-weight:400;color:#f5a623;letter-spacing:0.000px;transform:scaleX(1.1559);transform-origin:0 0;">Pending</div>
<div class="a" style="left:337px;top:1051px;width:1491px;height:1px;background:#dedede"></div>
<div class="t" style="left:352.40px;top:1020.15px;font-size:14px;font-weight:400;color:#333;letter-spacing:0.000px;transform:scaleX(1.0317);transform-origin:0 0;">337</div>
<div class="t" style="left:423.30px;top:1020.15px;font-size:14px;font-weight:400;color:#333;letter-spacing:0.000px;transform:scaleX(1.0929);transform-origin:0 0;">Basic Dedicated Server - NVMe</div>
<div class="t" style="left:898.50px;top:1020.15px;font-size:14px;font-weight:400;color:#333;letter-spacing:0.000px;transform:scaleX(1.0174);transform-origin:0 0;">12/28/2025</div>
<div class="t" style="left:1025.00px;top:1020.15px;font-size:14px;font-weight:400;color:#d0d0d0;letter-spacing:0.000px;transform:scaleX(1.1001);transform-origin:0 0;">Cancelled</div>
<div class="t" style="left:1158.00px;top:1020.15px;font-size:14px;font-weight:400;color:#333;letter-spacing:0.000px;transform:scaleX(1.1000);transform-origin:0 0;">0</div>
<div class="t" style="left:1284.00px;top:1020.15px;font-size:14px;font-weight:400;color:#5a76e0;letter-spacing:0.000px;transform:scaleX(1.0741);transform-origin:0 0;">$30.00</div>
<div class="t" style="left:1414.60px;top:1020.15px;font-size:14px;font-weight:400;color:#f55f5f;letter-spacing:0.000px;transform:scaleX(1.1169);transform-origin:0 0;">Invalid</div>
<svg style="left:1469.7px;top:1022px" width="15" height="15" viewBox="0 0 15 15"><circle cx="7.5" cy="7.5" r="7.2" fill="#f45050"/><circle cx="7.5" cy="4" r="1.1" fill="#fff"/><path d="M7.5 6.2 V11.5" stroke="#fff" stroke-width="1.8"/></svg>
<div class="a" style="left:317px;top:254px;width:222px;height:285px;border:4px solid #fb3333;border-radius:5px"></div>
<div class="a" style="left:337px;top:264px;width:183px;height:256px;background:#fff;border-radius:4px;box-shadow:0 5px 5px -3px rgba(0,0,0,.2),0 8px 10px 1px rgba(0,0,0,.14),0 3px 14px 2px rgba(0,0,0,.12)"></div>
<div class="a" style="left:337px;top:272px;width:183px;height:48px;background:#e3e8f9"></div>
<div class="t" style="left:353.00px;top:287.76px;font-size:16px;font-weight:400;color:#5a73e6;letter-spacing:0.000px;transform:scaleX(1.0798);transform-origin:0 0;">All</div>
<div class="t" style="left:353.00px;top:335.76px;font-size:16px;font-weight:400;color:#333;letter-spacing:0.000px;transform:scaleX(1.1035);transform-origin:0 0;">Cloud APP</div>
<div class="t" style="left:353.00px;top:383.76px;font-size:16px;font-weight:400;color:#333;letter-spacing:0.000px;transform:scaleX(1.0121);transform-origin:0 0;">GPU VPS</div>
<div class="t" style="left:353.00px;top:431.76px;font-size:16px;font-weight:400;color:#333;letter-spacing:0.000px;transform:scaleX(1.0348);transform-origin:0 0;">VPS Server</div>
<div class="t" style="left:353.00px;top:479.76px;font-size:16px;font-weight:400;color:#333;letter-spacing:0.000px;transform:scaleX(1.1180);transform-origin:0 0;">sqlclusters</div>
</body></html>
